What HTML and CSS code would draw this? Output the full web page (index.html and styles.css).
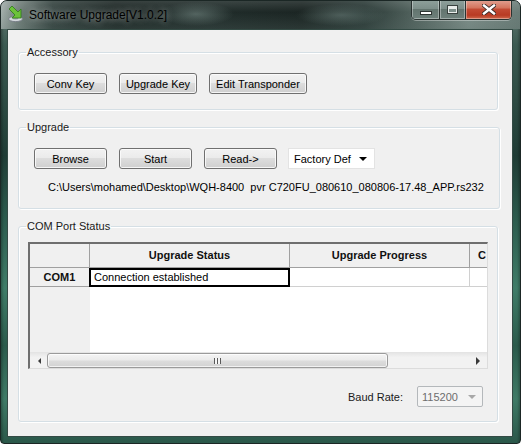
FILE: index.html
```html
<!DOCTYPE html>
<html>
<head>
<meta charset="utf-8">
<title>Software Upgrade</title>
<link rel="stylesheet" href="styles.css">
</head>
<body>
<div class="window">
  <div class="titlebar">
    <svg class="app-icon" width="16" height="16" viewBox="0 0 16 16">
      <ellipse cx="7.5" cy="13" rx="7" ry="2.6" fill="#d4d8dc" stroke="#7b828a" stroke-width="1"/>
      <ellipse cx="7.5" cy="12.6" rx="3" ry="1" fill="#9aa0a6"/>
      <path d="M1 3 L4 0 L10 6 L13 3 L13 12 L4 12 L7 9 Z" fill="#6cc23a" stroke="#2f7a18" stroke-width="0.8" stroke-linejoin="round"/>
    </svg>
    <span class="title">Software Upgrade[V1.0.2]</span>
    <div class="caption-btns">
      <div class="cap cap-min"><span class="min-glyph"></span></div>
      <div class="cap cap-max"><span class="max-glyph"></span></div>
      <div class="cap cap-close">
        <svg width="14" height="11" viewBox="0 0 14 11">
          <path d="M2 1.5 L12 9.5 M12 1.5 L2 9.5" stroke="#3a2a26" stroke-width="4.2" stroke-linecap="square"/>
          <path d="M2 1.5 L12 9.5 M12 1.5 L2 9.5" stroke="#ffffff" stroke-width="2.4" stroke-linecap="square"/>
        </svg>
      </div>
    </div>
  </div>
  <div class="client">
    <fieldset class="group group-acc">
      <legend>Accessory</legend>
      <div class="btn-row">
        <button class="btn w73">Conv Key</button>
        <button class="btn w78">Upgrade Key</button>
        <button class="btn w98">Edit Transponder</button>
      </div>
    </fieldset>

    <fieldset class="group group-upg">
      <legend>Upgrade</legend>
      <div class="btn-row">
        <button class="btn w73">Browse</button>
        <button class="btn w73">Start</button>
        <button class="btn w73">Read-&gt;</button>
        <div class="combo combo-factory">
          <span>Factory Def</span>
          <span class="arrow"></span>
        </div>
      </div>
      <div class="path">C:\Users\mohamed\Desktop\WQH-8400  pvr C720FU_080610_080806-17.48_APP.rs232</div>
    </fieldset>

    <fieldset class="group group-com">
      <legend>COM Port Status</legend>
      <div class="grid">
        <div class="grid-view">
          <div class="cells">
            <div class="hc"></div>
            <div class="hc">Upgrade Status</div>
            <div class="hc">Upgrade Progress</div>
            <div class="hc hc-last">C</div>
            <div class="rh">COM1</div>
            <div class="dc sel">Connection established</div>
            <div class="dc"></div>
            <div class="dc"></div>
            <div class="fill-rh"></div>
            <div class="fill"></div>
          </div>
        </div>
        <div class="hscroll">
          <div class="sb-btn"><span class="tri-left"></span></div>
          <div class="sb-thumb"><span class="grip"></span></div>
          <div class="sb-track"></div>
          <div class="sb-btn"><span class="tri-right"></span></div>
        </div>
      </div>
      <div class="baud-row">
        <span class="baud-label">Baud Rate:</span>
        <div class="combo combo-baud">
          <span>115200</span>
          <span class="arrow arrow-dis"></span>
        </div>
      </div>
    </fieldset>
  </div>
</div>
</body>
</html>
```

FILE: styles.css
```css
* { box-sizing: border-box; }
html, body { margin: 0; padding: 0; background: #ffffff; }
body {
  font-family: "Liberation Sans", Arial, sans-serif;
  font-size: 11px;
  color: #000;
}

.window {
  width: 521px;
  height: 444px;
  display: flex;
  flex-direction: column;
  border: 1px solid #1b2725;
  border-radius: 7px 7px 4px 4px;
  overflow: hidden;
  background:
    linear-gradient(90deg, rgba(0,0,0,0.25) 0, rgba(0,0,0,0) 3px, rgba(0,0,0,0) calc(100% - 3px), rgba(0,0,0,0.25) 100%),
    linear-gradient(180deg, #6a7c77 0, #3b5a51 10%, #1f3c35 35%, #2c5c4e 50%, #3f7c68 65%, #2a5a4b 78%, #3e7a66 90%, #2a5749 100%);
}

/* ---------- title bar ---------- */
.titlebar {
  height: 28px;
  flex: none;
  display: flex;
  align-items: flex-start;
  background:
    radial-gradient(ellipse 38px 12px at 195px 13px, rgba(125,145,140,0.55), rgba(125,145,140,0)),
    radial-gradient(ellipse 45px 11px at 340px 14px, rgba(125,145,140,0.45), rgba(125,145,140,0)),
    linear-gradient(180deg, rgba(255,255,255,0.12) 0, rgba(255,255,255,0) 40%, rgba(90,110,105,0.25) 100%),
    linear-gradient(90deg, #a3aeab 0, #76847f 3%, #33413e 10%, #1c2624 22%, #202c2a 40%, #1b2523 58%, #2a3936 70%, #53645f 80%, #7d8e89 90%, #6a7c77 100%);
}
.app-icon {
  margin: 5px 0 0 7px;
  flex: none;
}
.title {
  margin-left: 5px;
  align-self: center;
  font-size: 12px;
  color: #000;
  line-height: 16px;
  margin-top: -1px;
  text-shadow: 0 0 6px rgba(255,255,255,0.55), 0 0 10px rgba(255,255,255,0.35);
}
.caption-btns {
  margin-left: auto;
  margin-right: 8px;
  margin-top: -1px;
  display: flex;
  height: 20px;
  border: 1px solid #2a3331;
  border-top: none;
  border-radius: 0 0 5px 5px;
  overflow: hidden;
  box-shadow: 0 1px 0 rgba(255,255,255,0.35);
}
.cap {
  height: 100%;
  display: flex;
  align-items: center;
  justify-content: center;
  box-shadow: inset 0 0 0 1px rgba(255,255,255,0.35);
}
.cap-min {
  width: 28px;
  background: linear-gradient(180deg, #8fa19c 0, #7d8f8a 45%, #63756f 50%, #6e807b 100%);
  border-right: 1px solid #2a3331;
}
.cap-max {
  width: 26px;
  background: linear-gradient(180deg, #8fa19c 0, #7d8f8a 45%, #63756f 50%, #6e807b 100%);
  border-right: 1px solid #2a3331;
}
.cap-close {
  width: 45px;
  background: linear-gradient(180deg, #e2a293 0, #d4765f 40%, #c24a33 50%, #b83b24 80%, #cf6a4d 100%);
}
.min-glyph {
  width: 12px;
  height: 4px;
  margin-top: 6px;
  background: #fff;
  border: 1px solid #2e3533;
}
.max-glyph {
  width: 11px;
  height: 9px;
  border: 1px solid #39423f;
  box-shadow: inset 0 0 0 1px #e8ecea, inset 0 2px 0 1px #e8ecea;
  background: #7d8f8a;
}

/* ---------- client area ---------- */
.client {
  flex: 1;
  margin: 0 7px 6px 6px;
  background: #f0f0f0;
  border: 1px solid #334a44;
  padding: 15px 0 0 10px;
}

.group {
  width: 480px;
  margin: 0 0 10px 0;
  border: 1px solid #d5dfe5;
  border-radius: 3px;
  padding: 14px 15px 15px 15px;
  box-shadow: inset 1px 1px 0 #ffffff, 1px 1px 0 #ffffff;
}
.group legend {
  font-size: 11px;
  line-height: 14px;
  padding: 0 1px;
  margin-left: -8px;
  color: #1a1a1a;
}
.group-upg { padding-bottom: 14px; }
.group-com { padding: 9px 9px 14px 9px; }
.group-com legend { margin-left: -2px; }

.btn-row {
  display: flex;
  gap: 12px;
  align-items: center;
}
.btn {
  height: 21px;
  padding: 0;
  font-family: "Liberation Sans", Arial, sans-serif;
  font-size: 11px;
  color: #000;
  border: 1px solid #707070;
  border-radius: 3px;
  background: linear-gradient(180deg, #f2f2f2 0, #ebebeb 45%, #dddddd 50%, #cfcfcf 100%);
  box-shadow: inset 0 0 0 1px rgba(252,252,252,0.85);
}
.w73 { width: 73px; }
.w78 { width: 78px; }
.w98 { width: 98px; }

.combo {
  display: flex;
  align-items: center;
  justify-content: space-between;
  height: 21px;
}
.combo-factory {
  width: 87px;
  margin-left: -1px;
  background: #ffffff;
  border: 1px solid #e3e3e3;
  padding: 0 7px 0 5px;
}
.arrow {
  width: 0;
  height: 0;
  border-left: 4px solid transparent;
  border-right: 4px solid transparent;
  border-top: 4px solid #000;
}
.arrow-dis { border-top-color: #a8a8a8; }

.path {
  margin: 11px 0 0 14px;
  line-height: 14px;
  white-space: pre;
}

/* ---------- grid ---------- */
.grid {
  width: 460px;
  height: 127px;
  display: flex;
  flex-direction: column;
  border-top: 2px solid #6e6e6e;
  border-left: 2px solid #6e6e6e;
  border-right: 1px solid #dcdcdc;
  border-bottom: 1px solid #dcdcdc;
  background: #fff;
}
.grid-view {
  flex: 1;
  overflow: hidden;
}
.cells {
  display: grid;
  grid-template-columns: 60px 200px 180px 17px;
  grid-template-rows: 24px 19px 1fr;
  width: max-content;
  height: 100%;
}
.hc {
  background: #f0f0f0;
  border-right: 1px solid #a0a0a0;
  border-bottom: 1px solid #a0a0a0;
  font-weight: bold;
  text-align: center;
  line-height: 23px;
  color: #111;
}
.hc-last { text-align: left; padding-left: 8px; border-right: none; }
.rh {
  background: #f0f0f0;
  border-right: 1px solid #a0a0a0;
  border-bottom: 1px solid #a0a0a0;
  font-weight: bold;
  text-align: center;
  line-height: 18px;
  color: #111;
}
.dc {
  background: #fff;
  border-right: 1px solid #d0d0d0;
  border-bottom: 1px solid #d0d0d0;
  line-height: 17px;
  padding-left: 2px;
}
.dc:nth-child(8) { border-right: none; }
.sel {
  margin-left: -1px;
  padding-left: 3px;
  border: 2px solid #000;
  line-height: 15px;
}
.fill-rh { background: #f0f0f0; }
.fill { grid-column: 2 / -1; background: #fff; }

.hscroll {
  height: 16px;
  flex: none;
  display: flex;
  align-items: stretch;
  background: linear-gradient(180deg, #e6e6e6 0, #f2f2f2 30%, #f2f2f2 100%);
  border-top: 1px solid #e4e4e4;
}
.sb-btn {
  width: 17px;
  flex: none;
  display: flex;
  align-items: center;
  justify-content: center;
}
.tri-left {
  width: 0; height: 0;
  border-top: 3px solid transparent;
  border-bottom: 3px solid transparent;
  border-right: 3px solid #3a3a3a;
  margin-left: 2px;
}
.tri-right {
  width: 0; height: 0;
  border-top: 4px solid transparent;
  border-bottom: 4px solid transparent;
  border-left: 4px solid #3a3a3a;
  margin-left: -1px;
}
.sb-thumb {
  width: 341px;
  flex: none;
  border: 1px solid #9b9b9b;
  border-radius: 3px;
  background: linear-gradient(180deg, #f4f4f4 0, #ebebeb 45%, #dcdcdc 55%, #d3d3d3 100%);
  box-shadow: inset 0 0 0 1px rgba(255,255,255,0.7);
  display: flex;
  align-items: center;
  justify-content: center;
}
.grip {
  width: 7px;
  height: 6px;
  background: repeating-linear-gradient(90deg, #5a5a5a 0, #5a5a5a 1px, #f6f6f6 1px, #f6f6f6 3px);
}
.sb-track { flex: 1; }

/* ---------- baud ---------- */
.baud-row {
  display: flex;
  justify-content: flex-end;
  align-items: center;
  gap: 14px;
  margin-top: 17px;
  padding-right: 5px;
}
.baud-label { color: #1a1a1a; }
.combo-baud {
  width: 66px;
  background: #f4f4f4;
  border: 1px solid #b4b8bb;
  border-radius: 2px;
  padding: 0 6px 0 4px;
  color: #6d6d6d;
}
```
